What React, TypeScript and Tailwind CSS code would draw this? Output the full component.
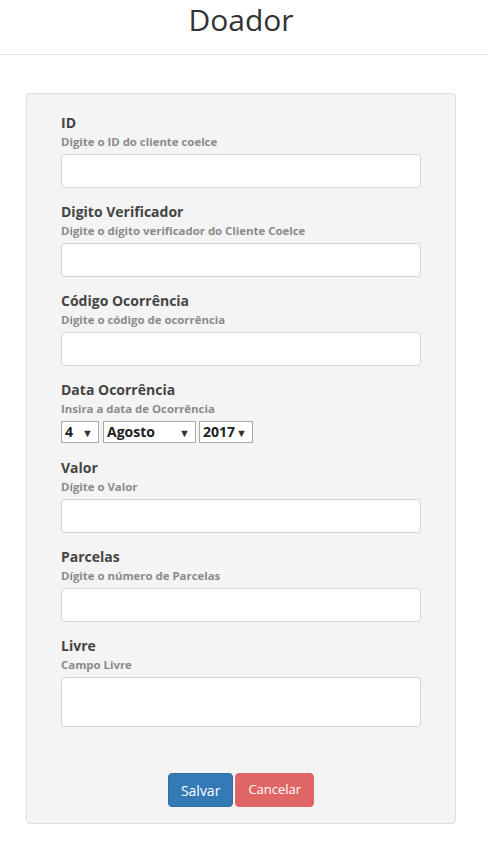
import React from 'react';

const fields = [
  { label: 'ID', hint: 'Digite o ID do cliente coelce' },
  { label: 'Digito Verificador', hint: 'Digite o dígito verificador do Cliente Coelce' },
  { label: 'Código Ocorrência', hint: 'Digite o código de ocorrência' },
];

const fields2 = [
  { label: 'Valor', hint: 'Dígite o Valor' },
  { label: 'Parcelas', hint: 'Dígite o número de Parcelas' },
];

function Label({ label, hint }: { label: string; hint: string }) {
  return (
    <>
      <div className="text-[14px] leading-[20px] font-bold text-[#444]">{label}</div>
      <div className="mt-[1px] text-[11.4px] leading-[16px] font-bold text-[#8a8a8a]">{hint}</div>
    </>
  );
}

function FakeSelect({ value, width }: { value: string; width: string }) {
  return (
    <div className={`${width} h-[22px] bg-white border border-[#a9a9a9] flex items-center justify-between pl-[3px] pr-[5px]`}>
      <span className="text-[14px] font-bold text-[#222] leading-none">{value}</span>
      <span className="text-[11px] text-[#333] leading-none">▼</span>
    </div>
  );
}

export default function App() {
  return (
    <div className="min-h-[853px] bg-white font-['Open_Sans',sans-serif] text-[#333]">
      <div className="h-[55px] border-b border-[#e8e8e8] text-center pr-[6px]">
        <h1 className="text-[30px] leading-[40px] font-normal text-[#333]">Doador</h1>
      </div>

      <div className="ml-[26px] mt-[38px] w-[430px] bg-[#f4f4f4] border border-[#dedede] rounded-[4px] pt-[19px] pb-[16px] pl-[34px] pr-[34px]">
        {fields.map((f) => (
          <div key={f.label} className="mb-[14px]">
            <Label label={f.label} hint={f.hint} />
            <div className="mt-[4px] w-[360px] h-[34px] bg-white border border-[#d4d4d4] rounded-[4px]" />
          </div>
        ))}

        <div className="mb-[15px]">
          <Label label="Data Ocorrência" hint="Insira a data de Ocorrência" />
          <div className="mt-[4px] flex">
            <FakeSelect value="4" width="w-[38px]" />
            <div className="ml-[4px]">
              <FakeSelect value="Agosto" width="w-[93px]" />
            </div>
            <div className="ml-[3px]">
              <FakeSelect value="2017" width="w-[54px]" />
            </div>
          </div>
        </div>

        {fields2.map((f) => (
          <div key={f.label} className="mb-[14px]">
            <Label label={f.label} hint={f.hint} />
            <div className="mt-[4px] w-[360px] h-[34px] bg-white border border-[#d4d4d4] rounded-[4px]" />
          </div>
        ))}

        <div>
          <Label label="Livre" hint="Campo Livre" />
          <div className="mt-[4px] w-[360px] h-[50px] bg-white border border-[#d4d4d4] rounded-[4px]" />
        </div>

        <div className="mt-[46px] flex justify-center gap-[2px]">
          <button className="h-[34px] px-[12px] bg-[#337ab7] border border-[#2e6da4] rounded-[4px] text-white text-[14px]">
            Salvar
          </button>
          <button className="h-[34px] px-[12px] bg-[#e06666] border border-[#e06666] rounded-[4px] text-white text-[13px]">
            Cancelar
          </button>
        </div>
      </div>
    </div>
  );
}
